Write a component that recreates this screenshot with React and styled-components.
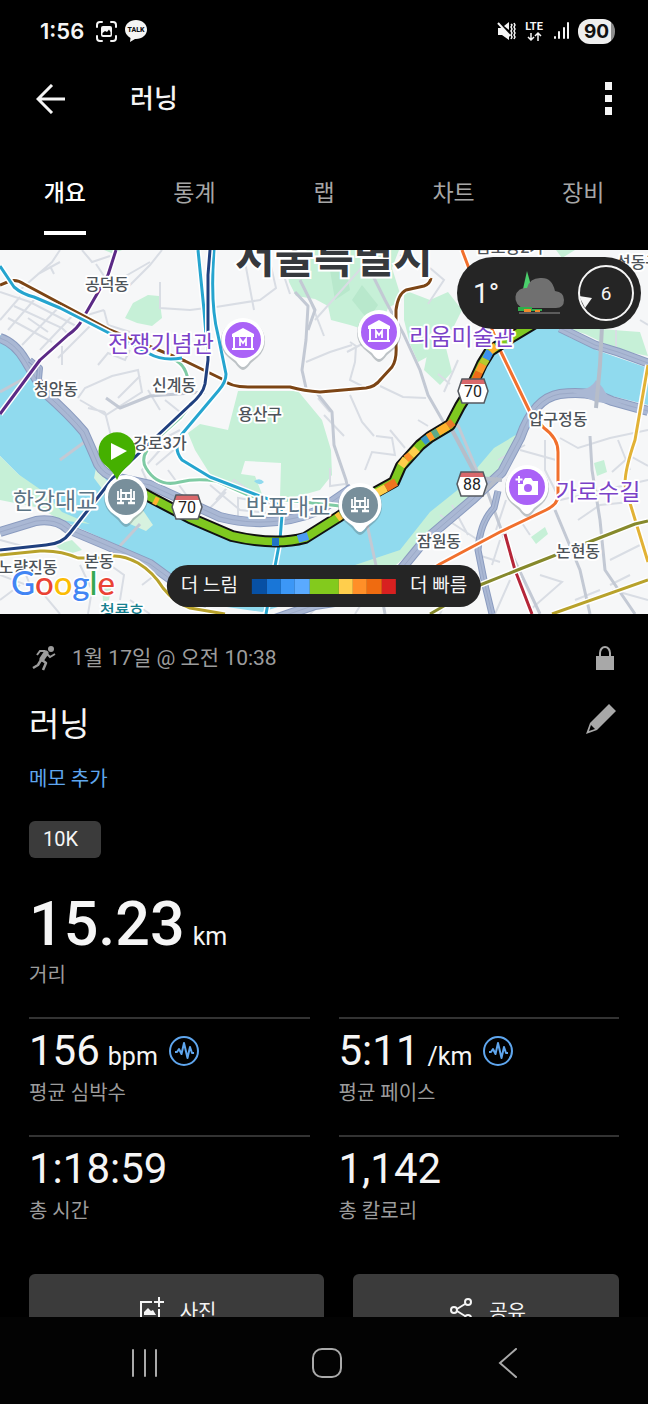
import React, { useState } from "react";
import styled, { createGlobalStyle } from "styled-components";

const GlobalStyle = createGlobalStyle`
  * {
    box-sizing: border-box;
  }

  body {
    margin: 0;
    background: #000;
    color: #f5f5f5;
    font-family: Roboto, "Noto Sans CJK KR", sans-serif;
  }

  button {
    padding: 0;
    border: 0;
    background: none;
    color: inherit;
    font: inherit;
    cursor: pointer;
  }

  svg {
    display: block;
  }
`;

const Page = styled.div`
  display: flex;
  flex-direction: column;
  height: 100vh;
  background: #000;
`;

const Content = styled.main`
  flex: 1;
  min-height: 0;
  overflow-y: auto;
  scrollbar-width: none;
`;

/* ---------- status bar ---------- */

const StatusBar = styled.div`
  display: flex;
  align-items: center;
  justify-content: space-between;
  height: 62px;
  padding: 0 33px 0 40px;
`;

const StatusGroup = styled.div`
  display: flex;
  align-items: center;
  gap: 8px;
`;

const Clock = styled.span`
  margin-right: 4px;
  font-family: Inter, sans-serif;
  font-size: 22px;
  font-weight: 600;
`;

const Battery = styled.span`
  width: 37px;
  height: 25px;
  border-radius: 12px;
  background: linear-gradient(to right, #eee 88%, #8c8c8c 88%);
  color: #111;
  font-family: Inter, sans-serif;
  font-size: 19px;
  font-weight: 700;
  line-height: 25px;
  text-align: center;
`;

/* ---------- header and tabs ---------- */

const Header = styled.header`
  display: flex;
  align-items: center;
  height: 74px;
  padding: 0 30px 0 36px;
`;

const HeaderTitle = styled.h1`
  flex: 1;
  margin: 0 0 0 64px;
  font-size: 26px;
  font-weight: 500;
  line-height: 34px;
`;

const Tabs = styled.nav`
  display: grid;
  grid-template-columns: repeat(5, 1fr);
  flex-shrink: 0;
  height: 114px;
  padding: 32px 0 14px;
`;

const Tab = styled.button`
  display: flex;
  justify-content: center;
  color: ${({ $active }) => ($active ? "#fff" : "#a6a6a6")};
  font-size: 23px;
  font-weight: ${({ $active }) => ($active ? 500 : 400)};
  line-height: 52px;

  span {
    height: 67px;
    border-bottom: 4px solid ${({ $active }) => ($active ? "#fff" : "transparent")};
  }
`;

/* ---------- map ---------- */

const MapArea = styled.section`
  position: relative;
  height: 364px;
  overflow: hidden;
`;

const MapSvg = styled.svg`
  width: 100%;
  height: 100%;
`;

const Weather = styled.div`
  position: absolute;
  top: 7px;
  right: 7px;
  display: flex;
  align-items: center;
  justify-content: space-between;
  width: 184px;
  height: 72px;
  padding: 0 6px 0 16px;
  border-radius: 36px;
  background: #252525;
  font-size: 28px;
`;

const Legend = styled.div`
  position: absolute;
  bottom: 7px;
  left: 50%;
  display: flex;
  align-items: center;
  gap: 14px;
  height: 42px;
  padding: 0 14px;
  border-radius: 21px;
  background: #252525;
  font-size: 19px;
  line-height: 44px;
  white-space: nowrap;
  transform: translateX(-50%);
`;

const PaceScale = styled.div`
  display: flex;
  width: 144px;
  height: 15px;
`;

const PaceStep = styled.span`
  flex: ${({ $span }) => $span || 1};
  background: ${({ $color }) => $color};
`;

/* ---------- activity details ---------- */

const Details = styled.section`
  padding: 0 29px 40px;
`;

const MetaRow = styled.div`
  display: flex;
  align-items: center;
  height: 88px;
  color: #9c9c9c;
  font-size: 21px;

  time {
    flex: 1;
    margin-left: 13px;
    padding-bottom: 4px;
  }
`;

const TitleRow = styled.div`
  display: flex;
  justify-content: space-between;
  height: 42px;

  button {
    height: 38px;
  }
`;

const ActivityTitle = styled.h2`
  margin: 0;
  font-size: 33px;
  font-weight: 400;
  line-height: 46px;
`;

const MemoLink = styled.a`
  display: block;
  width: fit-content;
  margin-top: 18px;
  color: #5fa6ee;
  font-size: 20px;
  line-height: 34px;
  text-decoration: none;
`;

const Tag = styled.span`
  display: block;
  width: 72px;
  height: 37px;
  margin-top: 25px;
  padding-left: 14px;
  border-radius: 6px;
  background: #3b3b3b;
  font-size: 20px;
  line-height: 37px;
`;

const Distance = styled.div`
  margin: 34px 0 28px;
`;

const DistanceValue = styled.div`
  height: 64px;
  margin-bottom: 5px;
  font-size: 61px;
  font-weight: 500;
  line-height: 64px;
`;

const Unit = styled.span`
  margin-left: 8px;
  font-size: 25px;
  font-weight: 400;
  line-height: 24px;
`;

const StatLabel = styled.div`
  color: #9c9c9c;
  font-size: 20px;
  line-height: 28px;
`;

const StatGrid = styled.div`
  display: grid;
  grid-template-columns: 1fr 1fr;
  column-gap: 29px;
`;

const Stat = styled.div`
  height: 118px;
  padding-top: 8px;
  border-top: 2px solid #333;
`;

const StatValue = styled.div`
  display: flex;
  align-items: center;
  gap: 10px;
  height: 48px;
  margin-bottom: 4px;
  font-size: 42px;
  line-height: 48px;
`;

const Actions = styled.div`
  display: grid;
  grid-template-columns: 10fr 9fr;
  gap: 29px;
  margin-top: 21px;
`;

const ActionButton = styled.button`
  display: flex;
  align-items: center;
  justify-content: center;
  gap: 16px;
  height: 72px;
  padding-left: 3px;
  border-radius: 6px;
  background: #3b3b3b;
  font-size: 20px;
`;

const SystemNav = styled.nav`
  display: flex;
  align-items: center;
  justify-content: space-between;
  flex-shrink: 0;
  height: 87px;
  padding: 4px 120px 0 125px;
  background: #030303;

  button {
    display: flex;
    justify-content: center;
    width: 40px;
  }
`;

const tabs = ["개요", "통계", "랩", "차트", "장비"];

const paceSteps = [
  { color: "#0750a4" },
  { color: "#1976d7" },
  { color: "#3c97f6" },
  { color: "#5aaaff" },
  { color: "#83ca1d", span: 2 },
  { color: "#ffce4c" },
  { color: "#ff8f28" },
  { color: "#ef6b10" },
  { color: "#d82020" },
];

const stats = [
  { value: "156", unit: "bpm", label: "평균 심박수" },
  { value: "5:11", unit: "/km", label: "평균 페이스" },
  { value: "1:18:59", label: "총 시간" },
  { value: "1,142", label: "총 칼로리" },
];

const parks = [
  "M238 391L298 391L322 420L331 450L332 475L320 490L285 500L245 492L210 474L195 450L188 433L200 424L228 430Z",
  "M284 250H399L392 268L402 300L388 308L378 334L350 325L331 320L328 306L315 299L296 296L289 282Z",
  "M404 290L430 300L448 292L462 310L452 330L440 324L428 336L440 350L418 362L410 344L404 320Z",
  "M428 350L446 348L452 372L440 385L424 370Z",
  "M125 318L133 303L148 295L159 296L162 318L152 326L137 323Z",
  "M104 250H122L114 254Z",
  "M560 326L640 332L648 356L618 350L585 334Z",
  "M556 250L575 250L562 258Z",
  "M531 537L545 527L548 534L536 544Z",
  "M594 463L604 460L607 472L597 476Z",
  "M55 545L72 540L82 550L66 555Z",
  "M102 586L112 584L109 600L103 602Z",
];

const localRoads = [
  "M0 292L30 302L80 328",
  "M0 320L20 297M8 330L40 293M22 345L62 304M40 350L76 312M58 358L92 324",
  "M14 306L62 328L70 336M8 318L52 342M28 318L48 332",
  "M20 290L52 262L60 250M38 274L60 262M50 266L54 274M82 250L92 262L110 256",
  "M96 264L104 276L130 285L150 265L162 250M110 285L150 262",
  "M104 310L108 325L130 332M104 310L84 316M160 282L160 308L190 310L206 308",
  "M62 346V365M98 365L108 353L125 360L130 350",
  "M78 398L85 388L112 376L138 370L142 392L106 415L80 400M88 408L105 412",
  "M105 412L112 440M118 398L140 376M148 390L160 410M165 400L180 412",
  "M216 307L260 300L276 288L270 262M245 262L254 310M284 276L290 294M372 256L315 320",
  "M306 362L330 352L352 345M312 305L324 336",
  "M350 342L356 346L355 362L350 380L362 386M347 352L362 344M380 386L403 397L426 398",
  "M318 398L330 412M324 415L344 436M350 395L362 422L374 436",
  "M365 470L372 452L395 455L392 438L376 436M390 430L405 448M330 468V486L345 484",
  "M418 420L428 426",
  "M210 485L240 510L285 515M216 500L234 480L270 504M226 492L210 508M238 516V498L262 502V518",
  "M152 492L142 470L160 450M156 465L176 448M165 438L180 430M168 470L190 500",
  "M430 268L444 280L428 304M444 392L458 360M438 374L450 384",
  "M560 438L578 448L610 438L648 430M520 450L556 460M498 460L525 445",
  "M545 440V470L560 500L648 480",
  "M612 472L630 456L648 466M618 440L630 470",
  "M578 520L600 505L630 502M575 545L600 538M610 560L640 545",
  "M520 520L530 535M540 575L562 582L530 610M506 500L496 530",
  "M452 505L468 535M440 515L478 540M478 555L500 562M500 540L492 565M495 614L510 580",
  "M0 575L40 590L60 614M20 560L32 590M80 565L92 590L88 614M110 565L124 575L120 600",
  "M0 600L20 585M142 585L155 575M130 600L150 614M610 585L630 575M575 600L600 590",
  "M612 590L648 600M616 330V350M640 320L648 325M400 255L420 268",
  "M0 540L30 548M195 585L205 614M310 614L340 585M355 614L370 590M440 614L450 590",
];

const mainRoads = [
  "M295 292L308 306L306 340L302 370L306 388",
  "M300 280L315 310L308 330",
  "M316 392L332 412L334 445L346 480L350 500",
  "M365 260L385 300L404 335L420 370L428 395L448 430",
  "M448 430L458 425L485 490",
  "M365 515L377 570L385 614",
  "M140 524L118 548L108 560",
  "M106 398L120 408L150 396L205 392",
  "M485 485L505 540L540 614",
  "M590 436L592 470L600 520L605 570L635 614",
  "M555 510L580 570L590 614",
  "M0 392L25 378M60 460L90 438",
];

const metroLines = [
  { d: "M170 358Q185 362 188 380M203 390L180 418L158 438Q138 455 146 468Q158 488 180 482Q196 478 216 481L250 496L340 506", color: "#7fcba4" },
  { d: "M116 250L108 275L82 320Q78 328 68 335L40 360L0 414", color: "#5b2a86" },
  { d: "M0 285L10 281Q17 279 24 284L110 330L185 361L222 379Q230 387 248 387H290Q304 391 320 392L366 388Q375 387 381 379L392 367Q397 360 396 345V310Q398 294 406 290L424 286Q430 284 431 278", color: "#7c4515" },
  { d: "M0 266L14 287Q22 294 34 297L60 308L150 354Q162 361 182 358", color: "#26a5cf" },
  { d: "M198 250L204 310L206 335", color: "#26a5cf" },
  { d: "M214 250Q210 305 218 335L226 374Q226 382 219 390L182 434Q172 448 182 460L210 477L262 497Q282 502 282 515L280 540L266 614", color: "#26a5cf" },
  { d: "M210 250L208 275L208 360L205 384Q203 394 190 405L155 438L113 478L70 533Q62 544 46 545L0 550", color: "#20407f" },
  { d: "M462 250L500 350L530 412L544 428Q558 438 558 452V496Q558 504 546 510L500 532L440 564L400 590", color: "#f1702d" },
  { d: "M648 365L635 440Q622 478 626 490L648 562", color: "#e2b235" },
  { d: "M505 534L515 570L532 614", color: "#b52639" },
  { d: "M430 614L480 585L520 569L635 524L648 521", color: "#86892c" },
  { d: "M552 614L648 580", color: "#b8a22b" },
  { d: "M0 555L40 551Q60 550 78 558L104 558Q118 552 138 563Q153 572 163 588Q174 602 190 608L225 614", color: "#b8a22b" },
];

const highways = [
  { d: "M0 338Q15 343 25 360L44 392Q70 415 84 432Q92 450 98 464Q104 475 118 478L150 485L220 517Q272 530 320 510L352 488", w: 10 },
  { d: "M0 532L36 521Q56 518 68 529L106 545L150 564L180 586L205 608", w: 10 },
  { d: "M272 620L315 605L380 595L425 540L472 500L502 472L520 438Q534 398 560 394Q590 390 612 401L648 411", w: 10 },
  { d: "M560 328L595 345L618 352L648 363", w: 9 },
  { d: "M498 491L494 508Q480 522 478 550L485 585L492 614", w: 7 },
  { d: "M30 360L40 368L38 390", w: 6 },
];

const paceSegments = [
  { d: "M154 500L158 502", color: "#ffb22e" },
  { d: "M272 542L279 542", color: "#2173c6" },
  { d: "M298 539L308 536", color: "#4c9bf5" },
  { d: "M337 518L341 515", color: "#ffc13a" },
  { d: "M375 494L386 488", color: "#ffce4c" },
  { d: "M386 488L396 482", color: "#ee7420" },
  { d: "M401 466L406 459", color: "#ffce4c" },
  { d: "M406 459L411 455", color: "#ff8f28" },
  { d: "M411 455L417 449", color: "#ffce4c" },
  { d: "M423 442L428 438", color: "#3a97c8" },
  { d: "M428 438L433 435", color: "#ff9a2e" },
  { d: "M433 435L438 432", color: "#5ca98a" },
  { d: "M438 432L448 426", color: "#ffb22e" },
  { d: "M448 426L453 422", color: "#e9792a" },
  { d: "M464 398L468 391", color: "#a4c827" },
  { d: "M475 381L479 372", color: "#ee6b18" },
  { d: "M479 372L483 364", color: "#ff9a2e" },
  { d: "M483 364L486 359", color: "#b8ca2e" },
  { d: "M486 359L490 351", color: "#3c91ee" },
  { d: "M490 351L496 346", color: "#ffb22e" },
];

const routePath =
  "M124 483L150 497L190 518L232 536Q275 546 305 538L340 516L365 498L394 482L401 466L420 445L430 437L450 425L460 406L470 390L482 364L490 351L510 338L535 323";

const placeLabels = [
  { text: "공덕동", x: 107, y: 290 },
  { text: "청암동", x: 56, y: 395 },
  { text: "신계동", x: 174, y: 391 },
  { text: "용산구", x: 260, y: 420 },
  { text: "강로3가", x: 160, y: 449 },
  { text: "압구정동", x: 558, y: 425 },
  { text: "잠원동", x: 439, y: 547 },
  { text: "논현동", x: 578, y: 557 },
  { text: "본동", x: 99, y: 567 },
  { text: "노량진동", x: 28, y: 573 },
  { text: "금호동2가", x: 510, y: 253 },
  { text: "성동구", x: 638, y: 268 },
  { text: "청룡호", x: 122, y: 617, color: "#16808f" },
  { text: "전쟁기념관", x: 161, y: 352, size: 23, color: "#7a42c8" },
  { text: "리움미술관", x: 462, y: 345, size: 23, color: "#7a42c8" },
  { text: "가로수길", x: 598, y: 500, size: 23, color: "#7a42c8" },
  { text: "한강대교", x: 55, y: 509, size: 23, color: "#5b7484" },
  { text: "반포대교", x: 288, y: 515, size: 23, color: "#5b7484" },
];

function Pin({ x, y, color, children }) {
  return (
    <g transform={`translate(${x} ${y})`}>
      <path d="M0 28Q-3 28 -8 21L-15 15A22 22 0 1 1 15 15L8 21Q3 28 0 28Z" fill="#52606a" opacity="0.35" transform="translate(0 2)" />
      <path d="M0 27Q-3 27 -7 21L-15 15A21.500 21.500 0 1 1 15 15L7 21Q3 27 0 27Z" fill="#fff" />
      <circle r="18" fill={color} />
      {children}
    </g>
  );
}

function Museum() {
  return (
    <g fill="#fff">
      <path d="M-11 -6L0 -12L11 -6V-3H-11Z" />
      <path d="M-9 -3V8M9 -3V8M-11 9H11" stroke="#fff" strokeWidth="2" />
      <path d="M-3 6V-1L0 3L3 -1V6" fill="none" stroke="#fff" strokeWidth="1.800" />
    </g>
  );
}

function Bridge() {
  return (
    <g fill="none" stroke="#fff" strokeWidth="1.800">
      <path d="M-5 -8V6M5 -8V6M-9 2H9M-5 -4H5M-8 -6V2M8 -6V2M0 -4V2" />
      <path d="M-9 6H-2M2 6H9" strokeWidth="2.500" />
    </g>
  );
}

function Shield({ x, y, children }) {
  return (
    <g transform={`translate(${x} ${y})`}>
      <path d="M-11 -12H11L15 0L11 12H-11L-15 0Z" fill="#fff" />
      <path d="M-11 -12H11L12.500 -7H-12.500Z" fill="#d9686b" />
      <path d="M-11 -12H11L15 0L11 12H-11L-15 0Z" fill="none" stroke="#555a60" strokeWidth="1.500" />
      <text y="6" textAnchor="middle" fontSize="16" fill="#222">
        {children}
      </text>
    </g>
  );
}

function RouteMap() {
  return (
    <MapSvg viewBox="0 250 648 364" preserveAspectRatio="xMidYMid slice" role="img" aria-label="지도">
      <rect y="250" width="648" height="364" fill="#f6f7f8" />
      {parks.map((d) => (
        <path key={d} d={d} fill="#c6f0d7" />
      ))}
      <path d="M330 270L345 262L350 290L335 300ZM352 300L362 285L378 305L368 320Z" fill="#b8e8cc" />
      <path d="M245 461L281 463L280 498L262 494L255 476L241 474Z" fill="#f6f7f8" />
      <path d="M254 481Q260 477 264 482Q259 487 254 481Z" fill="#90daee" />
      <path
        d="M0 335L14 342L40 392L80 430L96 468L112 482L150 497L232 536Q275 546 305 538L365 498L394 482L401 466L450 425L482 364L492 350L535 323L565 328L596 350L648 368V405L612 396L565 390L538 402L515 440L480 485L428 528L385 568L300 600L262 612L220 606L180 580L150 560L106 540L70 524L50 512L38 494L18 474L0 456Z"
        fill="#90daee"
      />
      <path d="M0 456L18 474L44 492L62 512L90 524L60 520L40 508L0 500Z" fill="#c6f0d7" />
      <path d="M96 468L108 482L124 487L140 506L153 525L146 531L130 524L112 502L94 478Z" fill="#d7f2df" />
      <path d="M524 430L494 448L460 488L430 512L400 550L352 566L350 574L395 566L432 532L480 495L508 465Z" fill="#c6f0d7" />
      <path d="M556 326L575 332L588 344L570 338Z" fill="#c6f0d7" />
      <g fill="none" stroke="#d9dde4" strokeWidth="2">
        {localRoads.map((d) => (
          <path key={d} d={d} />
        ))}
      </g>
      <g fill="none" stroke="#c3c9d4" strokeWidth="3" strokeLinejoin="round">
        {mainRoads.map((d) => (
          <path key={d} d={d} />
        ))}
      </g>
      {highways.map((road) => (
        <g key={road.d} fill="none" strokeLinejoin="round">
          <path d={road.d} stroke="#8a9bbf" strokeWidth={road.w} />
          <path d={road.d} stroke="#aab8d4" strokeWidth={road.w - 2} />
          <path d={road.d} stroke="#9caac8" strokeWidth="1" />
        </g>
      ))}
      <path d="M568 390Q590 392 596 380L603 388Q608 400 626 405L596 402Z" fill="#aab8d4" />
      <g stroke="#b6bdc9" strokeWidth="4" fill="none">
        <path d="M602 326L600 365L596 408" />
        <path d="M452 430L485 492M478 478L502 480M480 495L498 478" />
      </g>
      {metroLines.map((line) => (
        <g key={line.d} fill="none" strokeLinejoin="round">
          <path d={line.d} stroke="#fff" strokeWidth="6" />
          <path d={line.d} stroke={line.color} strokeWidth="3" />
        </g>
      ))}
      <g fill="none" strokeLinejoin="round">
        <path d={routePath} stroke="#111" strokeWidth="12" />
        <path d={routePath} stroke="#7fc920" strokeWidth="8" />
        {paceSegments.map((segment) => (
          <path key={segment.d} d={segment.d} stroke={segment.color} strokeWidth="8" />
        ))}
      </g>
      <text
        x="334"
        y="273"
        textAnchor="middle"
        fontSize="43"
        fontWeight="700"
        fill="#36393d"
        stroke="#fff"
        strokeWidth="4"
        paintOrder="stroke"
      >
        서울특별시
      </text>
      {placeLabels.map((label) => (
        <text
          key={label.text}
          x={label.x}
          y={label.y}
          textAnchor="middle"
          fontSize={label.size || 16}
          fontWeight={label.size ? 400 : 500}
          fill={label.color || "#4d5359"}
          stroke="#fff"
          strokeWidth="4"
          strokeLinejoin="round"
          paintOrder="stroke"
        >
          {label.text}
        </text>
      ))}
      <Shield x={473} y={391}>70</Shield>
      <Shield x={187} y={507}>70</Shield>
      <Shield x={472} y={484}>88</Shield>
      <Pin x={243} y={340} color="#aa62f7">
        <Museum />
      </Pin>
      <Pin x={379} y={332} color="#aa62f7">
        <Museum />
      </Pin>
      <Pin x={527} y={487} color="#aa62f7">
        <path
          d="M-9 -3V8H11V-6H6L4 -9H-2L-4 -6V-3ZM1 -3A4 4 0 1 1 1 5A4 4 0 1 1 1 -3Z"
          fill="#fff"
          fillRule="evenodd"
        />
        <path d="M-8 -11V-4M-11.500 -7.500H-4.500" stroke="#fff" strokeWidth="2" />
      </Pin>
      <Pin x={126} y={497} color="#788f9b">
        <Bridge />
      </Pin>
      <Pin x={360} y={505} color="#788f9b">
        <Bridge />
      </Pin>
      <path d="M117 480Q114 472 104 464A18.500 18.500 0 1 1 130 464Q120 472 117 480Z" fill="#45b000" />
      <path d="M111 443L127 451L111 460Z" fill="#fff" />
      <text
        x="11"
        y="595"
        fontFamily="Lato, sans-serif"
        fontSize="33"
        fontWeight="500"
        stroke="#fff"
        strokeWidth="3"
        paintOrder="stroke"
      >
        <tspan fill="#4285f4">G</tspan>
        <tspan fill="#ea4335">o</tspan>
        <tspan fill="#fbbc05">o</tspan>
        <tspan fill="#4285f4">g</tspan>
        <tspan fill="#34a853">l</tspan>
        <tspan fill="#ea4335">e</tspan>
      </text>
    </MapSvg>
  );
}

function PulseIcon() {
  return (
    <svg width="32" height="32" viewBox="0 0 32 32" fill="none" stroke="#5fa6ee" strokeWidth="2">
      <circle cx="16" cy="16" r="14" />
      <path d="M7 17H9L11 14L13.500 19L16 8L19.500 23L22 12L24 18H26" strokeLinejoin="round" />
    </svg>
  );
}

export default function App() {
  const [activeTab, setActiveTab] = useState("개요");

  return (
    <>
      <GlobalStyle />
      <Page>
        <StatusBar>
          <StatusGroup>
            <Clock>1:56</Clock>
            <svg width="21" height="21" viewBox="0 0 21 21" fill="none" stroke="#f5f5f5" strokeWidth="2">
              <path d="M1 6V4Q1 1 4 1H6M15 1H17Q20 1 20 4V6M20 15V17Q20 20 17 20H15M6 20H4Q1 20 1 17V15" strokeLinecap="round" />
              <rect x="5" y="5" width="11" height="11" rx="2" fill="#f5f5f5" stroke="none" />
              <path d="M6.500 14V12L9 10L11 11L13 8.500L14.500 11V14Z" fill="#000" stroke="none" />
            </svg>
            <svg width="22" height="22" viewBox="0 0 22 22">
              <path d="M11 0C17 0 22 4 22 9.500S17 19 11 19H10L5 22L5.500 18Q0 15 0 9.500C0 4 5 0 11 0Z" fill="#f5f5f5" />
              <text x="11" y="12" textAnchor="middle" fontSize="7" fontWeight="800" fill="#111">
                TALK
              </text>
            </svg>
          </StatusGroup>
          <StatusGroup>
            <svg width="19" height="20" viewBox="0 0 19 20" fill="#f5f5f5">
              <path d="M1 7H5L12 14V19L5 14H1ZM7 5L12 1V9Z" />
              <path d="M1 2L13 15" stroke="#f5f5f5" strokeWidth="2" />
              <path d="M14 3L15 4L14 6L15 8L14 10L15 12L14 14L15 16L14 18M17 2L18 4L17 6L18 8L17 10L18 12L17 14L18 16L17 18" fill="none" stroke="#f5f5f5" strokeWidth="1.500" />
            </svg>
            <svg width="21" height="21" viewBox="0 0 21 21">
              <text x="10" y="9" textAnchor="middle" fontSize="11" fontWeight="700" fill="#f5f5f5">
                LTE
              </text>
              <path d="M7 12V19M4 16L7 19L10 16M14 20V12M11 15L14 12L17 15" fill="none" stroke="#f5f5f5" strokeWidth="1.500" />
            </svg>
            <svg width="17" height="18" viewBox="0 0 17 18" stroke="#f5f5f5" strokeWidth="2" strokeLinecap="round">
              <path d="M2 15V16M6 10V16M11 6V16M15 1V16" />
            </svg>
            <Battery>90</Battery>
          </StatusGroup>
        </StatusBar>

        <Header>
          <button aria-label="뒤로">
            <svg width="30" height="30" viewBox="0 0 30 30" fill="none" stroke="#f5f5f5" strokeWidth="3">
              <path d="M29 15H2M16 1L2 15L16 29" />
            </svg>
          </button>
          <HeaderTitle>러닝</HeaderTitle>
          <button aria-label="더보기">
            <svg width="20" height="34" viewBox="0 0 20 34" fill="#f5f5f5">
              <path d="M7 0H14V8H7ZM7 13H14V20H7ZM7 25H14V33H7Z" />
            </svg>
          </button>
        </Header>

        <Tabs>
          {tabs.map((tab) => (
            <Tab key={tab} $active={tab === activeTab} onClick={() => setActiveTab(tab)}>
              <span>{tab}</span>
            </Tab>
          ))}
        </Tabs>

        <Content>
          <MapArea>
            <RouteMap />
            <Weather>
              <span>1°</span>
              <svg width="52" height="48" viewBox="-2 0 52 48">
                <path d="M13 2L18 20H9Z" fill="#4bcf6c" />
                <path d="M10 39A10 10 0 1 1 13 19Q16 8 28 9Q38 9 41 22Q50 23 50 31Q50 39 42 39Z" fill="#707070" />
                <path d="M4 38H18V40H28V42H4Z" fill="#2fae4b" />
                <path d="M10 40H17V43H10ZM21 41H26V43H21Z" fill="#f08a2c" />
                <path d="M5 44H46" stroke="#5b5b5b" strokeWidth="2" />
              </svg>
              <svg width="58" height="58" viewBox="0 0 58 58">
                <circle cx="29" cy="29" r="27" fill="none" stroke="#f5f5f5" strokeWidth="2" />
                <path d="M2 32L15 34L8 44Z" fill="#f5f5f5" />
                <text x="29" y="36" textAnchor="middle" fontSize="19" fill="#f5f5f5">
                  6
                </text>
              </svg>
            </Weather>
            <Legend>
              <span>더 느림</span>
              <PaceScale>
                {paceSteps.map((step) => (
                  <PaceStep key={step.color} $color={step.color} $span={step.span} />
                ))}
              </PaceScale>
              <span>더 빠름</span>
            </Legend>
          </MapArea>

          <Details>
            <MetaRow>
              <svg width="30" height="30" viewBox="0 0 30 30" fill="none" stroke="#9c9c9c">
                <circle cx="22" cy="6" r="3" fill="#9c9c9c" stroke="none" />
                <path d="M17 10L13 16" strokeWidth="5" strokeLinecap="round" />
                <path d="M16 8H11L8 12M18 11L21 14L26 11" strokeWidth="2" />
                <path d="M13 17L17 20L14 27M12 17L9 22L4 25" strokeWidth="2.500" strokeLinejoin="round" />
              </svg>
              <time>1월 17일 @ 오전 10:38</time>
              <svg width="28" height="28" viewBox="0 0 28 28">
                <path d="M9 12V9A5 6 0 0 1 19 9V12" fill="none" stroke="#a8a8a8" strokeWidth="2" />
                <path d="M5 12H23V26H5Z" fill="#a8a8a8" />
              </svg>
            </MetaRow>
            <TitleRow>
              <ActivityTitle>러닝</ActivityTitle>
              <button aria-label="편집">
                <svg width="34" height="34" viewBox="0 0 34 34" fill="#a8a8a8">
                  <path d="M24 0L31 7L12 26L1 30L5 19ZM6 21L4 27L10 25Z" fillRule="evenodd" />
                </svg>
              </button>
            </TitleRow>
            <MemoLink href="#memo">메모 추가</MemoLink>
            <Tag>10K</Tag>

            <Distance>
              <DistanceValue>
                15.23
                <Unit>km</Unit>
              </DistanceValue>
              <StatLabel>거리</StatLabel>
            </Distance>

            <StatGrid>
              {stats.map((stat) => (
                <Stat key={stat.label}>
                  <StatValue>
                    <span>
                      {stat.value}
                      {stat.unit && <Unit>{stat.unit}</Unit>}
                    </span>
                    {stat.unit && <PulseIcon />}
                  </StatValue>
                  <StatLabel>{stat.label}</StatLabel>
                </Stat>
              ))}
            </StatGrid>

            <Actions>
              <ActionButton>
                <svg width="24" height="28" viewBox="0 0 24 28" fill="none" stroke="#f5f5f5" strokeWidth="2">
                  <path d="M12 6H1V25H19V13" />
                  <path d="M19 1V11M14 6H24" />
                  <path d="M4 19V16L8 12L11 15L13 14L16 19Z" fill="#f5f5f5" stroke="none" />
                </svg>
                사진
              </ActionButton>
              <ActionButton>
                <svg width="24" height="24" viewBox="0 0 24 24" fill="none" stroke="#f5f5f5" strokeWidth="2">
                  <circle cx="19" cy="4" r="3" />
                  <circle cx="5" cy="12" r="3" />
                  <circle cx="19" cy="20" r="3" />
                  <path d="M8 11L16 6M8 13L16 18" />
                </svg>
                공유
              </ActionButton>
            </Actions>
          </Details>
        </Content>

        <SystemNav>
          <button aria-label="최근 앱">
            <svg width="28" height="28" viewBox="0 0 28 28" stroke="#aaa" strokeWidth="2" strokeLinecap="round">
              <path d="M2 1V27M14 1V27M25 1V27" />
            </svg>
          </button>
          <button aria-label="홈">
            <svg width="30" height="30" viewBox="0 0 30 30" fill="none" stroke="#aaa" strokeWidth="2">
              <rect x="1" y="1" width="28" height="28" rx="9" />
            </svg>
          </button>
          <button aria-label="이전">
            <svg width="20" height="30" viewBox="0 0 20 30" fill="none" stroke="#aaa" strokeWidth="2" strokeLinecap="round">
              <path d="M18 1L2 15L18 29" />
            </svg>
          </button>
        </SystemNav>
      </Page>
    </>
  );
}
